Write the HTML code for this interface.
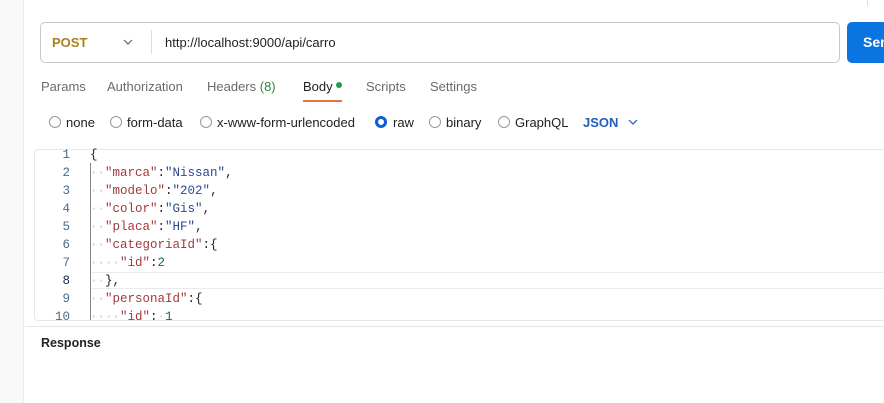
<!DOCTYPE html>
<html><head><meta charset="utf-8"><style>
*{margin:0;padding:0;box-sizing:border-box}
body{width:884px;height:403px;overflow:hidden;background:#fff;font-family:"Liberation Sans",sans-serif;position:relative}
.abs{position:absolute}
.strip{left:0;top:0;width:24px;height:403px;background:#f9f9f9;border-right:1px solid #ececec}
.url{left:40px;top:22px;width:800px;height:41px;border:1px solid #c8c8c8;border-radius:5px}
.send{left:847px;top:22px;width:60px;height:41px;background:#0c74e0;border-radius:5px;color:#fff;font-weight:bold;font-size:14px;line-height:41px;padding-left:16px}
.tabs span{position:absolute;top:79px;font-size:13px;color:#6b6b6b}
.opt{position:absolute;top:115px;font-size:13px;color:#222}
.rad{position:absolute;top:116px;width:12px;height:12px;border:1px solid #999;border-radius:50%}
.code{font-family:"Liberation Mono",monospace;font-size:12.5px}
.ln{position:absolute;width:36px;text-align:right;left:34px;color:#4a6a8a;font-family:"Liberation Mono",monospace;font-size:12.5px}
.cl{position:absolute;left:90px;white-space:pre;font-family:"Liberation Mono",monospace;font-size:12.5px;color:#222}
.k{color:#a23a3a}.s{color:#2a4a8a}.n{color:#0b6b6b}.d{color:#ccc}
</style></head><body>
<div class="abs strip"></div>
<div class="abs" style="left:867px;top:0;width:1px;height:6px;background:#ddd"></div>
<div class="abs url"></div>
<div class="abs" style="left:52px;top:35px;font-size:13px;font-weight:bold;color:#a8801e">POST</div>
<svg class="abs" style="left:123px;top:38px" width="10" height="8"><path d="M1 2l4 4 4-4" stroke="#666" fill="none" stroke-width="1.2"/></svg>
<div class="abs" style="left:151px;top:30px;width:1px;height:24px;background:#ddd"></div>
<div class="abs" style="left:165px;top:35px;font-size:13px;color:#222">http://localhost:9000/api/carro</div>
<div class="abs send">Send</div>
<div class="tabs">
<span style="left:41px">Params</span><span style="left:107px">Authorization</span><span style="left:207px">Headers <span style="position:static;color:#2e8540">(8)</span></span>
<span style="left:303px;color:#222">Body</span><span style="left:336px;top:82px;width:6px;height:6px;border-radius:50%;background:#1aa34a"></span>
<span style="left:366px">Scripts</span><span style="left:430px">Settings</span>
</div>
<div class="abs" style="left:303px;top:100px;width:39px;height:2px;background:#e0743a"></div>
<div class="rad" style="left:49px"></div><div class="opt" style="left:66px">none</div>
<div class="rad" style="left:110px"></div><div class="opt" style="left:127px">form-data</div>
<div class="rad" style="left:200px"></div><div class="opt" style="left:217px">x-www-form-urlencoded</div>
<div class="rad" style="left:375px;border:3.5px solid #0c5ed7"></div><div class="opt" style="left:393px">raw</div>
<div class="rad" style="left:429px"></div><div class="opt" style="left:446px">binary</div>
<div class="rad" style="left:498px"></div><div class="opt" style="left:515px">GraphQL</div>
<div class="opt" style="left:583px;color:#1f5fb8;font-weight:bold">JSON</div>
<svg class="abs" style="left:628px;top:118px" width="10" height="8"><path d="M1 2l4 4 4-4" stroke="#1f5fb8" fill="none" stroke-width="1.2"/></svg>
<div class="abs" style="left:34px;top:149px;width:850px;height:172px;border:1px solid #e8e8e8;border-right:none;border-radius:4px 0 0 4px"></div>
<div class="abs" style="left:90px;top:272px;width:794px;height:17px;border-top:1px solid #eaeaea;border-bottom:1px solid #eaeaea"></div>
<div class="abs" style="left:90px;top:163px;width:1px;height:157px;background:#888"></div>
<div class="ln" style="top:148px">1</div><div class="ln" style="top:166px">2</div><div class="ln" style="top:184px">3</div><div class="ln" style="top:202px">4</div><div class="ln" style="top:220px">5</div><div class="ln" style="top:238px">6</div><div class="ln" style="top:256px">7</div><div class="ln" style="top:274px;color:#1a2a4a">8</div><div class="ln" style="top:292px">9</div><div class="ln" style="top:310px;height:10px;overflow:hidden">10</div>
<div class="cl" style="top:148px">{</div>
<div class="cl" style="top:166px"><span class="d">··</span><span class="k">"marca"</span>:<span class="s">"Nissan"</span>,</div>
<div class="cl" style="top:184px"><span class="d">··</span><span class="k">"modelo"</span>:<span class="s">"202"</span>,</div>
<div class="cl" style="top:202px"><span class="d">··</span><span class="k">"color"</span>:<span class="s">"Gis"</span>,</div>
<div class="cl" style="top:220px"><span class="d">··</span><span class="k">"placa"</span>:<span class="s">"HF"</span>,</div>
<div class="cl" style="top:238px"><span class="d">··</span><span class="k">"categoriaId"</span>:{</div>
<div class="cl" style="top:256px"><span class="d">····</span><span class="k">"id"</span>:<span class="n">2</span></div>
<div class="cl" style="top:274px"><span class="d">··</span>},</div>
<div class="cl" style="top:292px"><span class="d">··</span><span class="k">"personaId"</span>:{</div>
<div class="cl" style="top:310px;height:10px;overflow:hidden"><span class="d">····</span><span class="k">"id"</span>:<span class="d">·</span><span class="n">1</span></div>
<div class="abs" style="left:25px;top:326px;width:859px;height:1px;background:#e6e6e6"></div>
<div class="abs" style="left:41px;top:336px;font-size:12.5px;font-weight:bold;color:#222">Response</div>
</body></html>
